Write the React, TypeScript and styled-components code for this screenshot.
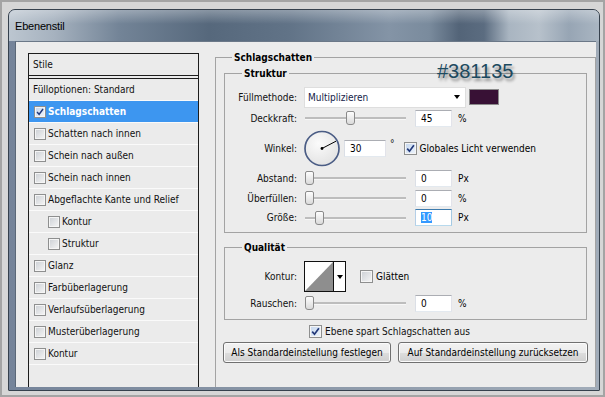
import React from "react";
import styled, { createGlobalStyle } from "styled-components";

const UI_FONT = `"DejaVu Sans Condensed", "Liberation Sans", Arial, sans-serif`;

const GlobalStyle = createGlobalStyle`
  html, body { margin: 0; padding: 0; }
  body { background: #d4d4d4; font-family: ${UI_FONT}; font-size: 10px; color: #111; }
  * { box-sizing: border-box; }
`;

const Screen = styled.div`
  width: 605px;
  height: 397px;
  overflow: hidden;
  background: #d6d6d6;
  border: 2px solid #a4a4a4;
  padding: 7px 3px 4px 6px;
`;

const Window = styled.div`
  height: 100%;
  display: flex;
  flex-direction: column;
  border: 1px solid #36414d;
  border-radius: 7px 7px 1px 1px;
  overflow: hidden;
  background: linear-gradient(90deg, #75849a 0%, #8794a5 40%, #a1acb9 100%);
`;

const TitleBar = styled.div`
  height: 31px;
  flex-shrink: 0;
  display: flex;
  align-items: center;
  padding-left: 6px;
  background:
    linear-gradient(180deg, rgba(255, 255, 255, 0.3) 0%, rgba(255, 255, 255, 0) 45%),
    linear-gradient(
      90deg,
      #bcc6d0 0px,
      #a6b2bf 45px,
      #738497 110px,
      #56687c 200px,
      #617387 280px,
      #8494a6 380px,
      #7a8b9d 420px,
      #536478 450px,
      #5b6c80 475px,
      #a9b5c1 500px,
      #b7c1cb 530px,
      #97a5b4 560px,
      #abb7c3 592px
    );
`;

const TitleText = styled.span`
  font-family: "Liberation Sans", Arial, sans-serif;
  font-size: 11px;
  color: #000;
  letter-spacing: -0.2px;
`;

const Client = styled.div`
  flex: 1;
  display: flex;
  margin: 0 3px 3px 6px;
  padding-left: 12px;
  background: #ececec;
  border-left: 1px solid #5b6878;
  border-top: 1px solid #6b7888;
`;

/* ---------- left styles list ---------- */

const StylesPanel = styled.div`
  width: 171px;
  flex-shrink: 0;
  margin-top: 11px;
  display: flex;
  flex-direction: column;
  border: 1px solid #1d1d1d;
  border-bottom: none;
  background: #ebebeb;
`;

const StylesHeader = styled.div`
  height: 22px;
  display: flex;
  align-items: center;
  padding-left: 4px;
  border-bottom: 1px solid #1d1d1d;
  margin-bottom: 2px;
`;

const StylesList = styled.div`
  flex: 1;
  border-top: 1px solid #1d1d1d;
`;

const StyleRow = styled.div<{ $selected?: boolean; $indent?: boolean; $plain?: boolean }>`
  height: 22px;
  display: flex;
  align-items: center;
  gap: 2px;
  padding-left: ${(p) => (p.$plain ? 4 : p.$indent ? 19 : 5)}px;
  border-bottom: 1px solid #fafafa;
  background: ${(p) => (p.$selected ? "#3d96f0" : "transparent")};
  color: ${(p) => (p.$selected ? "#fff" : "#111")};
  font-weight: ${(p) => (p.$selected ? "bold" : "normal")};
  white-space: nowrap;
`;

/* ---------- checkbox ---------- */

const Box = styled.span<{ $checked?: boolean; $size: number }>`
  width: ${(p) => p.$size}px;
  height: ${(p) => p.$size}px;
  flex-shrink: 0;
  display: inline-flex;
  align-items: center;
  justify-content: center;
  border: 1px solid #8e8f8f;
  box-shadow: inset 0 0 0 1px #f5f5f5;
  background: ${(p) =>
    p.$checked
      ? "linear-gradient(135deg, #c4d6ee 0%, #eef4fb 100%)"
      : "linear-gradient(135deg, #cbcfd4 0%, #f6f6f6 100%)"};
`;

const CheckBox = ({ checked, size = 13 }: { checked?: boolean; size?: number }) => (
  <Box $checked={checked} $size={size}>
    {checked && (
      <svg width={size - 4} height={size - 4} viewBox="0 0 9 9">
        <path d="M1.2 4.6 L3.5 7.2 L7.9 1.2" fill="none" stroke="#22397a" strokeWidth="1.7" />
      </svg>
    )}
  </Box>
);

/* ---------- right side ---------- */

const SettingsColumn = styled.div`
  width: 381px;
  flex-shrink: 0;
  margin-left: 16px;
  margin-top: 15px;
  display: flex;
  flex-direction: column;
`;

const OuterGroup = styled.div`
  flex: 1;
  border: 1px solid #a3a3a3;
  border-bottom: none;
`;

const Group = styled.div<{ $mt: number; $pb: number }>`
  position: relative;
  margin: ${(p) => p.$mt}px 8px 0 8px;
  padding-bottom: ${(p) => p.$pb}px;
  border: 1px solid #a3a3a3;
`;

const Legend = styled.div<{ $ml: number; $mb: number }>`
  width: fit-content;
  margin: -7px 0 ${(p) => p.$mb}px ${(p) => p.$ml}px;
  padding: 0 2px;
  background: #ececec;
  font-weight: bold;
  line-height: 13px;
  color: #000;
`;

const FieldRow = styled.div<{ $h: number; $mt?: number }>`
  height: ${(p) => p.$h}px;
  margin-top: ${(p) => p.$mt ?? 0}px;
  display: flex;
  align-items: center;
  white-space: nowrap;
`;

const FieldLabel = styled.span`
  width: 72px;
  flex-shrink: 0;
  margin-right: 7px;
  text-align: right;
  color: #111;
`;

const Dropdown = styled.div`
  width: 162px;
  height: 21px;
  display: flex;
  align-items: center;
  padding-left: 3px;
  background: #fff;
  border: 1px solid #dedede;
  color: #14224a;
`;

const DropArrow = styled.span`
  margin-left: auto;
  margin-right: 5px;
  width: 0;
  height: 0;
  border-left: 3.5px solid transparent;
  border-right: 3.5px solid transparent;
  border-top: 4px solid #000;
`;

const Swatch = styled.div<{ $color: string }>`
  width: 30px;
  height: 16px;
  margin-left: 3px;
  background: ${(p) => p.$color};
  border: 1px solid #8b8b8b;
`;

const ColorNote = styled.div`
  position: absolute;
  left: 212px;
  top: -13px;
  font-family: "Liberation Sans", Arial, sans-serif;
  font-size: 20px;
  line-height: 20px;
  color: #1d4a5f;
  text-shadow: 2px 3px 3px rgba(0, 0, 0, 0.4);
`;

const Track = styled.div`
  position: relative;
  width: 101px;
  height: 14px;
  margin-left: 1px;
  flex-shrink: 0;
  &::before {
    content: "";
    position: absolute;
    left: 0;
    right: 0;
    top: 6px;
    height: 2px;
    background: #bdbdbd;
    border-bottom: 1px solid #f7f7f7;
  }
`;

const Thumb = styled.div`
  position: absolute;
  top: 0;
  width: 9px;
  height: 14px;
  border: 1px solid #8a8a8a;
  border-radius: 2px 2px 3px 3px;
  background: linear-gradient(180deg, #fdfdfd 0%, #dadada 100%);
`;

const Slider = ({ pct }: { pct: number }) => (
  <Track>
    <Thumb style={{ left: `${Math.round(pct * 92)}px` }} />
  </Track>
);

const NumField = styled.div<{ $w?: number; $ml?: number; $focus?: boolean }>`
  width: ${(p) => p.$w ?? 37}px;
  height: 17px;
  margin-left: ${(p) => p.$ml ?? 9}px;
  flex-shrink: 0;
  display: flex;
  align-items: center;
  padding-left: 5px;
  background: #fff;
  border: 1px solid;
  border-color: ${(p) =>
    p.$focus ? "#3d7bad #a4c9e3 #b7d9ed #b5cfe7" : "#abadb3 #e2e3ea #e3e9ef #dbdfe6"};
  color: #000;
`;

const Selected = styled.span`
  background: #3399ff;
  color: #fff;
`;

const Unit = styled.span`
  margin-left: 6px;
  color: #000;
`;

const Degree = styled.span`
  align-self: flex-start;
  margin-top: 10px;
  margin-left: 4px;
  font-size: 10px;
`;

const InlineCheck = styled.label<{ $ml: number }>`
  display: flex;
  align-items: center;
  gap: 3px;
  margin-left: ${(p) => p.$ml}px;
  color: #000;
`;

const ContourPicker = styled.div`
  width: 42px;
  height: 31px;
  display: flex;
  border: 1px solid #111;
  background: #fff;
  flex-shrink: 0;
`;

const ContourPreview = styled.div`
  width: 29px;
  height: 100%;
  border-right: 1px solid #111;
`;

const ContourArrow = styled.div`
  flex: 1;
  display: flex;
  align-items: center;
  justify-content: center;
  &::after {
    content: "";
    border-left: 3px solid transparent;
    border-right: 3px solid transparent;
    border-top: 4px solid #000;
  }
`;

const OptionRow = styled.div`
  height: 14px;
  margin: 4px 0 0 93px;
  display: flex;
  align-items: center;
  gap: 3px;
  white-space: nowrap;
`;

const ButtonRow = styled.div`
  display: flex;
  gap: 7px;
  margin: 4px 0 0 7px;
`;

const Button = styled.button<{ $w: number }>`
  width: ${(p) => p.$w}px;
  height: 21px;
  padding: 0;
  font-family: ${UI_FONT};
  font-size: 10px;
  color: #000;
  border: 1px solid #707070;
  border-radius: 3px;
  background: linear-gradient(180deg, #f2f2f2 0%, #ebebeb 50%, #dddddd 51%, #cfcfcf 100%);
  box-shadow: inset 0 0 0 1px #fbfbfb;
  white-space: nowrap;
`;

const Dial = () => (
  <svg width="37" height="37" viewBox="0 0 37 37" style={{ flexShrink: 0 }}>
    <defs>
      <radialGradient id="dialFill" cx="40%" cy="35%" r="70%">
        <stop offset="0%" stopColor="#fbfbfb" />
        <stop offset="100%" stopColor="#e2e2e2" />
      </radialGradient>
    </defs>
    <circle cx="18" cy="18.5" r="17" fill="url(#dialFill)" stroke="#4b5d85" strokeWidth="1.7" />
    <line x1="18" y1="18.5" x2="32" y2="11.2" stroke="#000" strokeWidth="1" />
    <circle cx="18" cy="18.5" r="1.4" fill="#000" />
  </svg>
);

const styleItems: { label: string; selected?: boolean; indent?: boolean; checked?: boolean; plain?: boolean }[] = [
  { label: "Fülloptionen: Standard", plain: true },
  { label: "Schlagschatten", selected: true, checked: true },
  { label: "Schatten nach innen" },
  { label: "Schein nach außen" },
  { label: "Schein nach innen" },
  { label: "Abgeflachte Kante und Relief" },
  { label: "Kontur", indent: true },
  { label: "Struktur", indent: true },
  { label: "Glanz" },
  { label: "Farbüberlagerung" },
  { label: "Verlaufsüberlagerung" },
  { label: "Musterüberlagerung" },
  { label: "Kontur" },
];

export default function App() {
  return (
    <>
      <GlobalStyle />
      <Screen>
        <Window>
          <TitleBar>
            <TitleText>Ebenenstil</TitleText>
          </TitleBar>
          <Client>
            <StylesPanel>
              <StylesHeader>Stile</StylesHeader>
              <StylesList>
                {styleItems.map((it, i) => (
                  <StyleRow key={i} $selected={it.selected} $indent={it.indent} $plain={it.plain}>
                    {!it.plain && <CheckBox checked={it.checked} size={12} />}
                    <span>{it.label}</span>
                  </StyleRow>
                ))}
              </StylesList>
            </StylesPanel>

            <SettingsColumn>
              <OuterGroup>
                <Legend $ml={16} $mb={0}>Schlagschatten</Legend>

                <Group $mt={9} $pb={5}>
                  <Legend $ml={17} $mb={6}>Struktur</Legend>
                  <ColorNote>#381135</ColorNote>
                  <FieldRow $h={22}>
                    <FieldLabel>Füllmethode:</FieldLabel>
                    <Dropdown>
                      Multiplizieren
                      <DropArrow />
                    </Dropdown>
                    <Swatch $color="#381135" />
                  </FieldRow>
                  <FieldRow $h={20}>
                    <FieldLabel>Deckkraft:</FieldLabel>
                    <Slider pct={0.45} />
                    <NumField>45</NumField>
                    <Unit>%</Unit>
                  </FieldRow>
                  <FieldRow $h={40}>
                    <FieldLabel>Winkel:</FieldLabel>
                    <Dial />
                    <NumField $w={42} $ml={3}>30</NumField>
                    <Degree>°</Degree>
                    <InlineCheck $ml={9}>
                      <CheckBox checked />
                      Globales Licht verwenden
                    </InlineCheck>
                  </FieldRow>
                  <FieldRow $h={20}>
                    <FieldLabel>Abstand:</FieldLabel>
                    <Slider pct={0} />
                    <NumField>0</NumField>
                    <Unit>Px</Unit>
                  </FieldRow>
                  <FieldRow $h={20}>
                    <FieldLabel>Überfüllen:</FieldLabel>
                    <Slider pct={0} />
                    <NumField>0</NumField>
                    <Unit>%</Unit>
                  </FieldRow>
                  <FieldRow $h={19}>
                    <FieldLabel>Größe:</FieldLabel>
                    <Slider pct={0.11} />
                    <NumField $focus>
                      <Selected>10</Selected>
                    </NumField>
                    <Unit>Px</Unit>
                  </FieldRow>
                </Group>

                <Group $mt={14} $pb={6}>
                  <Legend $ml={17} $mb={7}>Qualität</Legend>
                  <FieldRow $h={31}>
                    <FieldLabel>Kontur:</FieldLabel>
                    <ContourPicker>
                      <ContourPreview>
                        <svg width="28" height="29" viewBox="0 0 28 29">
                          <polygon points="0,29 28,0 28,29" fill="#8e8e8e" />
                        </svg>
                      </ContourPreview>
                      <ContourArrow />
                    </ContourPicker>
                    <InlineCheck $ml={14}>
                      <CheckBox />
                      Glätten
                    </InlineCheck>
                  </FieldRow>
                  <FieldRow $h={20} $mt={1}>
                    <FieldLabel>Rauschen:</FieldLabel>
                    <Slider pct={0} />
                    <NumField>0</NumField>
                    <Unit>%</Unit>
                  </FieldRow>
                </Group>

                <OptionRow>
                  <CheckBox checked />
                  <span>Ebene spart Schlagschatten aus</span>
                </OptionRow>

                <ButtonRow>
                  <Button $w={168}>Als Standardeinstellung festlegen</Button>
                  <Button $w={190}>Auf Standardeinstellung zurücksetzen</Button>
                </ButtonRow>
              </OuterGroup>
            </SettingsColumn>
          </Client>
        </Window>
      </Screen>
    </>
  );
}
